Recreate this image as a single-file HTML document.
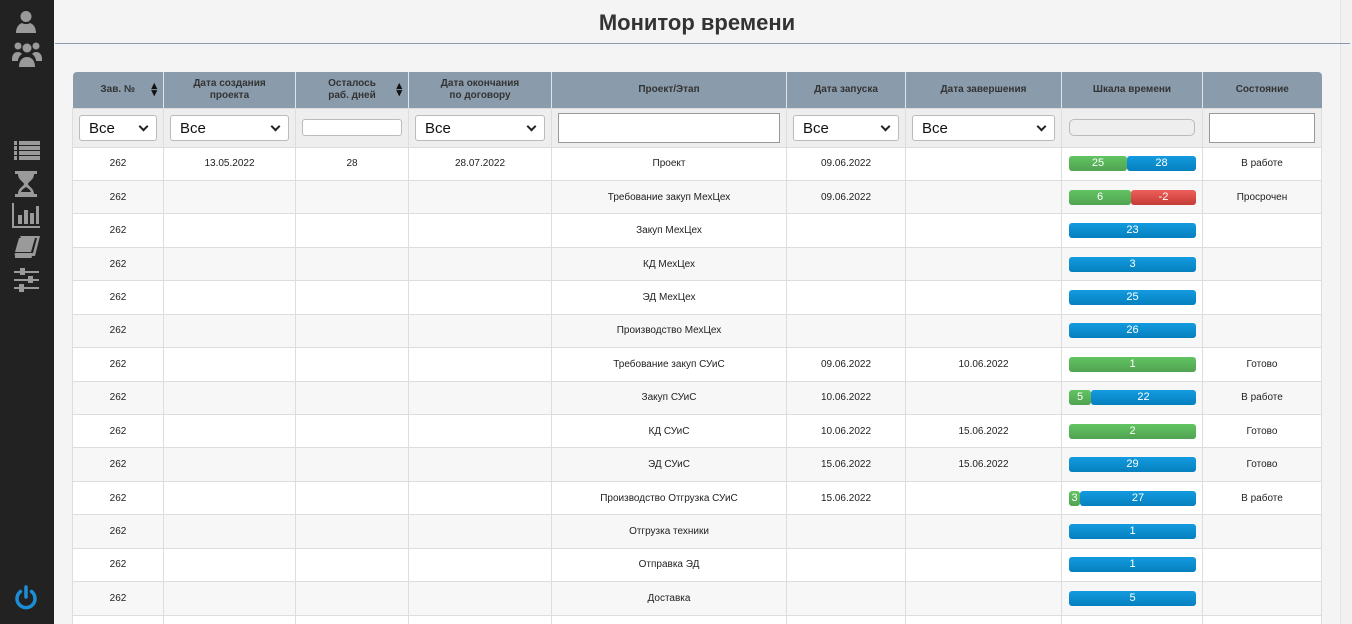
<!DOCTYPE html>
<html><head><meta charset="utf-8"><style>
*{box-sizing:border-box;margin:0;padding:0}
html,body{width:1352px;height:624px;overflow:hidden}
body{background:#f4f4f4;font-family:"Liberation Sans",sans-serif;position:relative}
.sb{position:absolute;left:0;top:0;width:54px;height:624px;background:#222}
.sb svg{position:absolute}
.scr{position:absolute;right:0;top:0;width:12px;height:624px;background:#f1f1f1;border-left:1px solid #e4e4e4}
h1{position:absolute;left:54px;width:1286px;top:10px;text-align:center;font-size:22px;font-weight:bold;color:#333}
.hr{position:absolute;left:55px;top:43px;width:1295px;height:1px;background:#8a9aae}
table{position:absolute;left:72px;top:72px;width:1249px;border-collapse:collapse;table-layout:fixed;font-size:10px;color:#222}
th{background:#8a9bab;color:#333;font-weight:bold;height:36px;border-right:1px solid #e0e4e8;font-size:10px;line-height:12px;position:relative}
th:first-child{border-top-left-radius:4px}th:last-child{border-top-right-radius:4px;border-right:0}
.srt{position:absolute;right:6px;top:11px;font-size:11px;color:#111;line-height:7px}
tr.f td{background:#eee;height:39px;padding:0 6px}
td{border:1px solid #ddd;text-align:center;height:33.45px;background:#fff}
tr.g td{background:#f7f7f7}
.sel{height:26px;border:1px solid #bbb;border-radius:3px;background:#fff;font-size:15px;text-align:left;padding:4px 9px;position:relative;color:#111}
.sel:after{content:"";position:absolute;right:9px;top:7px;width:5px;height:5px;border-right:2px solid #222;border-bottom:2px solid #222;transform:rotate(45deg)}
.inp{height:17px;border:1px solid #bbb;border-radius:3px;background:#fff}
.bar{display:flex;height:15px;margin:0 6px 0 7px}
.bar div{color:#fff;font-size:11px;line-height:15px;border-radius:3px;text-align:center}
.gr{background:linear-gradient(#62c462,#51a351)}.bl{background:linear-gradient(#149bdf,#0480be)}.rd{background:linear-gradient(#ee5f5b,#c43c35)}
</style></head><body>
<div class="sb">
<svg style="left:14px;top:10px" width="24" height="24" viewBox="0 0 24 24" fill="#9a9a9a"><circle cx="12" cy="6.5" r="5.5"/><path d="M2 23c0-6 3-9 6-10 2 1.5 6 1.5 8 0 3 1 6 4 6 10z"/></svg>
<svg style="left:12px;top:40px" width="30" height="28" viewBox="0 0 30 28" fill="#9a9a9a"><circle cx="15" cy="8" r="4.5"/><circle cx="6" cy="6" r="3.5"/><circle cx="24" cy="6" r="3.5"/><path d="M7 27c0-6 3-10 8-10s8 4 8 10z"/><path d="M0 19c0-4 2-7 6-7 2 0 3 1 4 2-3 2-4 5-4 7H0zM30 19c0-4-2-7-6-7-2 0-3 1-4 2 3 2 4 5 4 7h6z"/></svg>
<svg style="left:14px;top:141px" width="26" height="20" viewBox="0 0 26 20" fill="#9a9a9a"><rect x="0" y="0" width="3" height="4"/><rect x="5" y="0" width="21" height="4"/><rect x="0" y="5" width="3" height="4"/><rect x="5" y="5" width="21" height="4"/><rect x="0" y="10" width="3" height="4"/><rect x="5" y="10" width="21" height="4"/><rect x="0" y="15" width="3" height="4"/><rect x="5" y="15" width="21" height="4"/></svg>
<svg style="left:15px;top:171px" width="22" height="26" viewBox="0 0 22 26" fill="#9a9a9a"><rect x="0" y="0" width="22" height="3"/><rect x="0" y="23" width="22" height="3"/><path d="M3 3h16c0 6-6 8-6 10s6 4 6 10H3c0-6 6-8 6-10S3 9 3 3zM6 21h10c-1-3-4-4-5-5-1 1-4 2-5 5z"/></svg>
<svg style="left:12px;top:203px" width="28" height="25" viewBox="0 0 28 25" fill="#9a9a9a"><rect x="0" y="0" width="2" height="25"/><rect x="0" y="23" width="28" height="2"/><rect x="6" y="12" width="4" height="9"/><rect x="12" y="7" width="4" height="14"/><rect x="18" y="10" width="4" height="11"/><rect x="24" y="3" width="3" height="18"/></svg>
<svg style="left:14px;top:236px" width="26" height="24" viewBox="0 0 26 24" fill="#9a9a9a"><path d="M6 0h20l-5 20H2c-2 0-2-3 0-3h17l4-15H7z"/><path d="M5 2h16l-4 14H1z"/><path d="M1 20h17l-0.5 2H1z"/></svg>
<svg style="left:14px;top:268px" width="25" height="25" viewBox="0 0 25 25" fill="#9a9a9a"><rect x="0" y="3" width="25" height="2"/><rect x="0" y="11" width="25" height="2"/><rect x="0" y="19" width="25" height="2"/><rect x="6" y="0" width="5" height="7"/><rect x="14" y="8" width="5" height="7"/><rect x="5" y="16" width="5" height="8"/></svg>
<svg style="left:13px;top:585px" width="26" height="26" viewBox="0 0 26 26" fill="none" stroke="#1c8ed6" stroke-width="3.5" stroke-linecap="round"><path d="M7.5 6.5a9 9 0 1 0 11 0"/><path d="M13 2v10"/></svg>
</div>
<div class="scr"></div>
<h1>Монитор времени</h1>
<div class="hr"></div>
<table>
<colgroup><col style="width:91px"><col style="width:132px"><col style="width:113px"><col style="width:143px"><col style="width:235px"><col style="width:119px"><col style="width:156px"><col style="width:141px"><col style="width:119px"></colgroup>
<tr><th>Зав. №<span class="srt">▴<br>▾</span></th><th>Дата создания<br>проекта</th><th>Осталось<br>раб. дней<span class="srt">▴<br>▾</span></th><th>Дата окончания<br>по договору</th><th>Проект/Этап</th><th>Дата запуска</th><th>Дата завершения</th><th>Шкала времени</th><th>Состояние</th></tr>
<tr class="f"><td><div class="sel">Все</div></td><td><div class="sel">Все</div></td><td><div class="inp"></div></td><td><div class="sel">Все</div></td><td><div class="inp" style="height:30px;border-color:#999;border-radius:0"></div></td><td><div class="sel">Все</div></td><td><div class="sel">Все</div></td><td><div class="inp" style="background:#eee;border-radius:5px;margin:0 1px"></div></td><td><div class="inp" style="height:30px;border-color:#999;border-radius:0"></div></td></tr>
<tr><td>262</td><td>13.05.2022</td><td>28</td><td>28.07.2022</td><td>Проект</td><td>09.06.2022</td><td></td><td><div class="bar"><div class="gr" style="width:58px">25</div><div class="bl" style="flex:1">28</div></div></td><td>В работе</td></tr>
<tr class="g"><td>262</td><td></td><td></td><td></td><td>Требование закуп МехЦех</td><td>09.06.2022</td><td></td><td><div class="bar"><div class="gr" style="width:62px">6</div><div class="rd" style="flex:1">-2</div></div></td><td>Просрочен</td></tr>
<tr><td>262</td><td></td><td></td><td></td><td>Закуп МехЦех</td><td></td><td></td><td><div class="bar"><div class="bl" style="flex:1">23</div></div></td><td></td></tr>
<tr class="g"><td>262</td><td></td><td></td><td></td><td>КД МехЦех</td><td></td><td></td><td><div class="bar"><div class="bl" style="flex:1">3</div></div></td><td></td></tr>
<tr><td>262</td><td></td><td></td><td></td><td>ЭД МехЦех</td><td></td><td></td><td><div class="bar"><div class="bl" style="flex:1">25</div></div></td><td></td></tr>
<tr class="g"><td>262</td><td></td><td></td><td></td><td>Производство МехЦех</td><td></td><td></td><td><div class="bar"><div class="bl" style="flex:1">26</div></div></td><td></td></tr>
<tr><td>262</td><td></td><td></td><td></td><td>Требование закуп СУиС</td><td>09.06.2022</td><td>10.06.2022</td><td><div class="bar"><div class="gr" style="flex:1">1</div></div></td><td>Готово</td></tr>
<tr class="g"><td>262</td><td></td><td></td><td></td><td>Закуп СУиС</td><td>10.06.2022</td><td></td><td><div class="bar"><div class="gr" style="width:22px">5</div><div class="bl" style="flex:1">22</div></div></td><td>В работе</td></tr>
<tr><td>262</td><td></td><td></td><td></td><td>КД СУиС</td><td>10.06.2022</td><td>15.06.2022</td><td><div class="bar"><div class="gr" style="flex:1">2</div></div></td><td>Готово</td></tr>
<tr class="g"><td>262</td><td></td><td></td><td></td><td>ЭД СУиС</td><td>15.06.2022</td><td>15.06.2022</td><td><div class="bar"><div class="bl" style="flex:1">29</div></div></td><td>Готово</td></tr>
<tr><td>262</td><td></td><td></td><td></td><td>Производство Отгрузка СУиС</td><td>15.06.2022</td><td></td><td><div class="bar"><div class="gr" style="width:11px">3</div><div class="bl" style="flex:1">27</div></div></td><td>В работе</td></tr>
<tr class="g"><td>262</td><td></td><td></td><td></td><td>Отгрузка техники</td><td></td><td></td><td><div class="bar"><div class="bl" style="flex:1">1</div></div></td><td></td></tr>
<tr><td>262</td><td></td><td></td><td></td><td>Отправка ЭД</td><td></td><td></td><td><div class="bar"><div class="bl" style="flex:1">1</div></div></td><td></td></tr>
<tr class="g"><td>262</td><td></td><td></td><td></td><td>Доставка</td><td></td><td></td><td><div class="bar"><div class="bl" style="flex:1">5</div></div></td><td></td></tr>
<tr><td>262</td><td></td><td></td><td></td><td></td><td></td><td></td><td><div class="bar"><div class="bl" style="flex:1">1</div></div></td><td></td></tr>
</table>
</body></html>
